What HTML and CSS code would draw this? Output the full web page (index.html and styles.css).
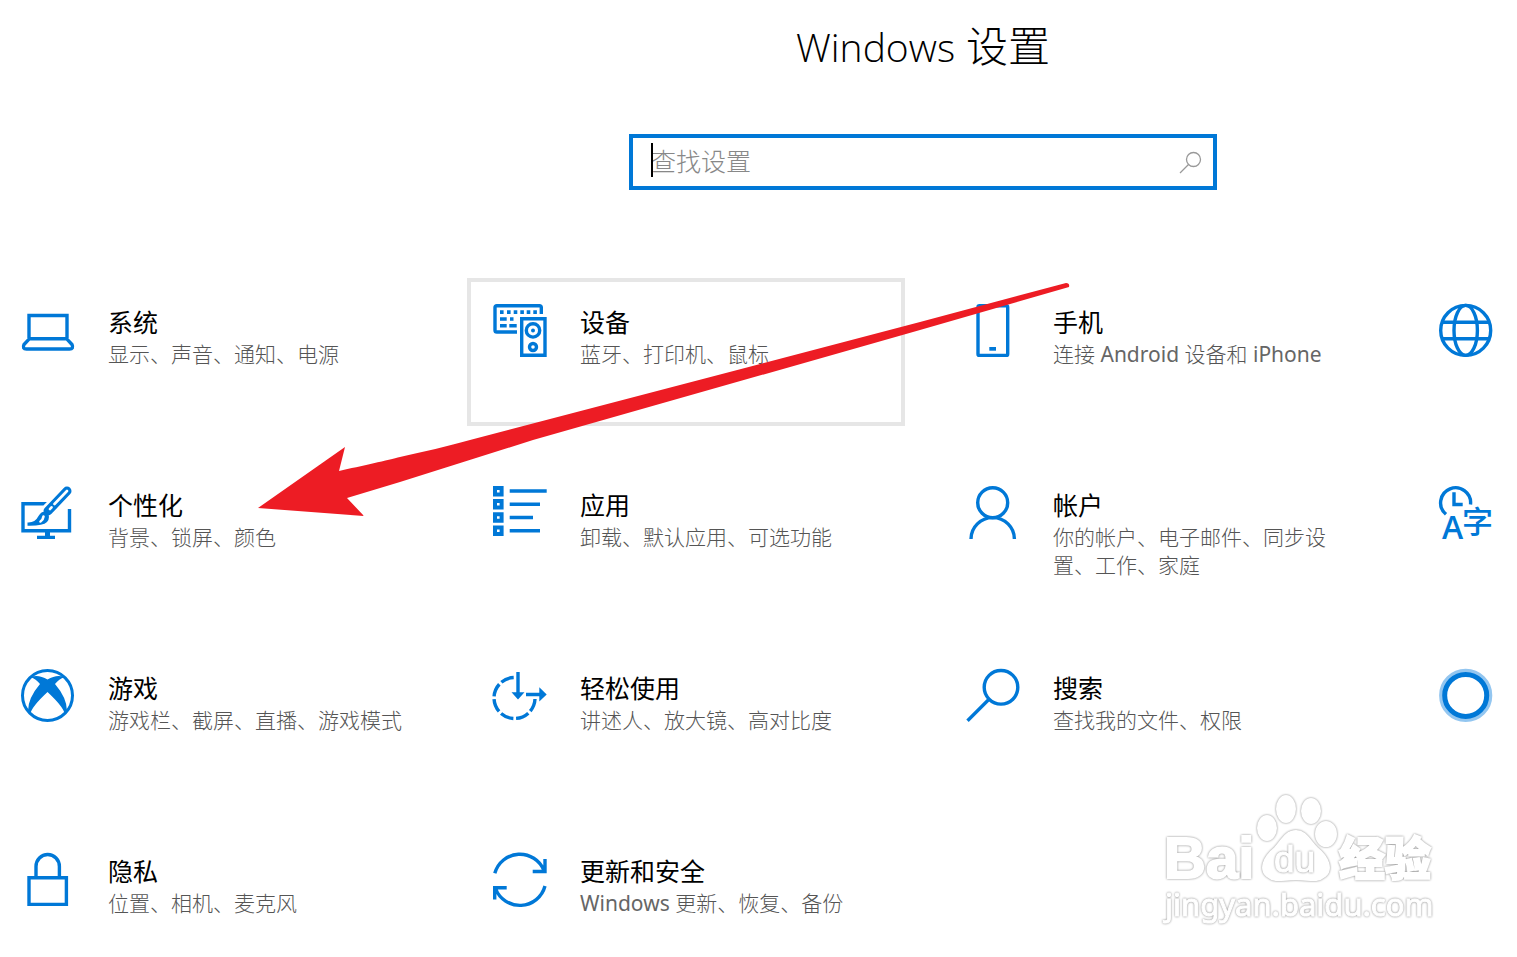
FILE: index.html
```html
<!DOCTYPE html>
<html lang="zh-CN">
<head>
<meta charset="utf-8">
<title>Windows 设置</title>
<link rel="stylesheet" href="styles.css">
</head>
<body>
<main class="settings">
  <header class="header">
    <h1 class="heading"><span class="heading-latin">Windows</span> 设置</h1>
    <form class="search">
      <span class="caret"></span>
      <input class="search-input" type="text" placeholder="查找设置" aria-label="查找设置">
      <button class="search-button" type="button" aria-label="搜索">
        <svg class="search-icon" viewBox="0 0 24 24"><circle cx="14.500" cy="9.500" r="7"/><path d="M9.500 14.500L1 23"/></svg>
      </button>
    </form>
  </header>

  <nav class="grid">
    <a class="card" href="#system">
      <svg class="icon" viewBox="0 0 54 54"><path d="M8 34V11.500H46V34M8.500 34.700H45.500L51 40.500Q53 45 48.500 45H5.500Q1 45 3 40.500Z"/></svg>
      <span class="text"><span class="title">系统</span><span class="desc">显示、声音、通知、电源</span></span>
    </a>
    <a class="card active" href="#devices">
      <svg class="icon" viewBox="0 0 54 54">
        <path d="M48.300 10V3.500Q48.300 1.700 46.500 1.700H3.800Q2 1.700 2 3.500V26.200Q2 28 3.800 28H24"/>
        <path class="solid" d="M7 6.300h3.600v3.600H7zM14 6.300h3.600v3.600H14zM20.700 6.300h3.600v3.600h-3.600zM27.300 6.300h3.600v3.600h-3.600zM33.700 6.300h3.600v3.600h-3.600zM40.300 6.300h3.600v3.600h-3.600zM7 13.300h6.700v3.400H7zM17 13.300h3.500v3.400H17zM7 20h6.700v3.400H7zM16.300 20h7.400v3.400h-7.400z"/>
        <path d="M28.700 14.700H52V51.300H28.700Z"/>
        <circle cx="40" cy="26.400" r="6.700"/><circle class="solid" cx="40" cy="26.400" r="2"/><circle cx="40" cy="43" r="3.500"/>
      </svg>
      <span class="text"><span class="title">设备</span><span class="desc">蓝牙、打印机、鼠标</span></span>
    </a>
    <a class="card" href="#phone">
      <svg class="icon" viewBox="0 0 54 54"><rect x="12" y="1.700" width="29.700" height="49.700" rx="1.500"/><path class="solid" d="M23.300 43H30v3.700h-6.700z"/></svg>
      <span class="text"><span class="title">手机</span><span class="desc">连接 <span class="latin">Android</span> 设备和 <span class="latin">iPhone</span></span></span>
    </a>
    <a class="card" href="#network" aria-label="网络和 Internet">
      <svg class="icon" viewBox="0 0 54 54"><circle cx="26.700" cy="26.400" r="25"/><ellipse cx="26.700" cy="26.400" rx="11.700" ry="25"/><path d="M3 18.300H50.500M3 34.700H50.500"/></svg>
    </a>

    <a class="card" href="#personalization">
      <svg class="icon" viewBox="0 0 54 54">
        <path d="M26 16.700H2V43.700H48.500V22"/><path class="solid" d="M24 45h5v4h-5zM16 48.700h18v3.300H16z"/>
        <path class="gap" d="M45.500 4.500L27 23"/><path class="handle" d="M46 4L27 24"/><path class="handle-core" d="M46 4L33.500 17M30.500 20.300L29 22"/>
        <path class="solid" d="M6.500 35.500Q14 36 17.500 29Q21 23 26 25.500Q30 30 26 35Q22 39 6.500 38.700Z"/><path class="handle-core" d="M22.500 29.500Q22 33 19.500 34.500"/>
      </svg>
      <span class="text"><span class="title">个性化</span><span class="desc">背景、锁屏、颜色</span></span>
    </a>
    <a class="card" href="#apps">
      <svg class="icon" viewBox="0 0 54 54"><path class="thick" d="M2 1h6.600v6.400H2zM2 14h6.600v6.400H2zM2 27.300h6.600v6.400H2zM2 40.600h6.600V47H2z"/><path d="M16.700 4H53.700M16.700 17.200H47M16.700 30.500H40M16.700 43.800H47"/></svg>
      <span class="text"><span class="title">应用</span><span class="desc">卸载、默认应用、可选功能</span></span>
    </a>
    <a class="card" href="#accounts">
      <svg class="icon" viewBox="0 0 54 54"><circle cx="26.700" cy="15.700" r="15"/><path d="M5 52A21.700 21.400 0 0 1 48.400 52"/></svg>
      <span class="text"><span class="title">帐户</span><span class="desc">你的帐户、电子邮件、同步设置、工作、家庭</span></span>
    </a>
    <a class="card" href="#time" aria-label="时间和语言">
      <svg class="icon" viewBox="0 0 54 54"><path d="M7 27.300A15 15 0 1 1 31.500 17.500M15 5.300V17.500H23.700"/><text class="latin-glyph" x="3" y="52">A</text><text class="han-glyph" x="23" y="46">字</text></svg>
    </a>

    <a class="card" href="#gaming">
      <svg class="icon" viewBox="0 0 54 54"><circle class="thin" cx="26.500" cy="25.500" r="25"/><path class="solid" d="M9.500 7Q17.500 4 26.500 9.500Q35.500 4 43.500 7Q38 9 34 14Q46 28 46 41L43.500 43Q41.500 36 26.500 22Q11.500 36 9.500 43L7 41Q7 28 19 14Q15 9 9.500 7Z"/></svg>
      <span class="text"><span class="title">游戏</span><span class="desc">游戏栏、截屏、直播、游戏模式</span></span>
    </a>
    <a class="card" href="#ease">
      <svg class="icon" viewBox="0 0 54 54"><path class="dashed" d="M20.700 7.500A20.500 20.500 0 1 0 42 29"/><path d="M25 2V24M33 24.500H47"/><path class="solid" d="M18.500 22.300H31.500L25 29.500ZM46.300 17.300L53.700 24.500L46.300 31.500Z"/></svg>
      <span class="text"><span class="title">轻松使用</span><span class="desc">讲述人、放大镜、高对比度</span></span>
    </a>
    <a class="card" href="#search">
      <svg class="icon" viewBox="0 0 54 54"><circle cx="35" cy="17.300" r="16.800"/><path d="M23 29.300L1.500 50.800"/></svg>
      <span class="text"><span class="title">搜索</span><span class="desc">查找我的文件、权限</span></span>
    </a>
    <a class="card" href="#cortana" aria-label="Cortana">
      <svg class="icon" viewBox="0 0 54 54"><circle class="halo" cx="26.700" cy="25.400" r="24.600"/><circle class="ring" cx="26.700" cy="25.400" r="21"/></svg>
    </a>

    <a class="card" href="#privacy">
      <svg class="icon" viewBox="0 0 54 54"><path d="M8 24.700H45.400V51.400H8ZM15 24V13.500A11.700 12 0 0 1 38.400 13.500V24"/></svg>
      <span class="text"><span class="title">隐私</span><span class="desc">位置、相机、麦克风</span></span>
    </a>
    <a class="card" href="#update">
      <svg class="icon" viewBox="0 0 54 54"><path d="M1.800 20.300A26 26 0 0 1 51 17.500M52 6V18.500H39.700M52 33A26 26 0 0 1 2.500 35.500M1.700 46.500V34.700H13.700"/></svg>
      <span class="text"><span class="title">更新和安全</span><span class="desc"><span class="latin">Windows</span> 更新、恢复、备份</span></span>
    </a>
  </nav>
</main>

<svg class="arrow" viewBox="0 0 820 240" aria-hidden="true"><path d="M0 229L87 168L81 192C103 187 131 181 142 178C165 173 190 167 212 161L662 43L808 4Q812 4 811 8L662 51L275 161L142 203L89 219L106 237Z"/></svg>

<svg class="watermark" viewBox="0 0 280 140" aria-hidden="true">
  <ellipse cx="107" cy="38" rx="9" ry="12"/><ellipse cx="126" cy="19" rx="9" ry="13"/><ellipse cx="151" cy="21" rx="9" ry="12"/><ellipse cx="166" cy="44" rx="10" ry="12"/>
  <path d="M136 41C146 41 149 50 157 58C168 67 173 79 165 86C157 93 149 89 136 89C123 89 115 93 107 86C99 79 104 67 115 58C122 50 126 41 136 41Z"/>
  <text class="mark-brand" x="4" y="88">Bai</text>
  <text class="mark-du" x="114" y="82">du</text>
  <text class="mark-han" x="179" y="85">经验</text>
  <text class="mark-url" x="5" y="126">jingyan.baidu.com</text>
</svg>
</body>
</html>
```
FILE: styles.css
```css
* { box-sizing: border-box; }

body {
  position: relative;
  margin: 0;
  min-height: 100vh;
  overflow: hidden;
  background: #fff;
  color: #000;
  font-family: "Noto Sans", "Noto Sans CJK SC", sans-serif;
}

.settings {
  width: max-content;
  min-width: 100%;
  margin-left: -5px;
}

.header {
  display: flex;
  flex-direction: column;
  align-items: center;
  gap: 58px;
  padding: 17px 0 88px;
}

.heading {
  margin: 0;
  font-family: "Open Sans", "Noto Sans CJK SC", sans-serif;
  font-size: 42px;
  font-weight: 300;
  line-height: 58px;
}

.heading-latin { font-size: 39px; }

.search {
  position: relative;
  display: flex;
  align-items: center;
  width: 588px;
  height: 56px;
  padding: 0 10px 0 18px;
  border: 4px solid #0078d7;
}

.caret {
  position: absolute;
  left: 18px;
  top: 5px;
  width: 2px;
  height: 34px;
  background: #000;
}

.search-input {
  flex: 1;
  min-width: 0;
  height: 100%;
  padding: 0 0 4px;
  border: 0;
  outline: 0;
  background: none;
  font-family: "Noto Sans CJK SC", sans-serif;
  font-size: 25px;
  font-weight: 300;
}

.search-input::placeholder { color: #888; opacity: 1; }

.search-button {
  width: 24px;
  height: 24px;
  padding: 0;
  border: 0;
  background: none;
}

.search-icon {
  display: block;
  fill: none;
  stroke: #999;
  stroke-width: 1.3;
}

.grid {
  display: grid;
  grid-template-columns: minmax(437px, 437fr) repeat(3, minmax(438px, 438fr));
  grid-auto-rows: minmax(148px, auto);
  gap: 35px;
}

.card {
  display: flex;
  align-items: flex-start;
  gap: 33px;
  padding: 22px;
  border: 4px solid transparent;
  color: inherit;
  text-decoration: none;
}

.active { border-color: #e6e6e6; }

.icon {
  flex: none;
  width: 54px;
  height: 54px;
  overflow: visible;
  fill: none;
  stroke: #0078d7;
  stroke-width: 3.4;
}

.icon .solid { fill: #0078d7; stroke: none; }
.icon .thin { stroke-width: 3; }
.icon .thick { stroke-width: 4; }
.icon .gap { stroke: #fff; stroke-width: 13; }
.icon .handle { stroke-width: 9; stroke-linecap: round; }
.icon .handle-core { stroke: #fff; stroke-width: 2.6; stroke-linecap: round; }
.icon .dashed { stroke-dasharray: 13.4 2.8; }
.icon .halo { stroke: #93c6f0; stroke-width: 4; }
.icon .ring { stroke-width: 5; }
.icon .latin-glyph, .icon .han-glyph { fill: #0078d7; stroke: none; }
.latin-glyph { font: 600 32px "Open Sans", sans-serif; }
.han-glyph { font: 500 31px "Noto Sans CJK SC", sans-serif; }

.text {
  display: flex;
  flex-direction: column;
  flex: 0 1 296px;
  gap: 2px;
  padding-top: 2px;
}

.title {
  font-size: 25px;
  font-weight: 400;
  line-height: 32px;
}

.desc {
  color: #555;
  font-size: 21px;
  font-weight: 300;
  line-height: 28px;
}

.latin {
  color: #666;
  font-weight: 400;
}

.arrow {
  position: absolute;
  left: 258px;
  top: 279px;
  width: 820px;
  height: 240px;
  fill: #ed1c24;
  pointer-events: none;
}

.watermark {
  position: absolute;
  right: 77px;
  top: 790px;
  width: 280px;
  height: 140px;
  overflow: visible;
  fill: #fff;
  stroke: #fff;
  stroke-width: 2;
  pointer-events: none;
}

.watermark > * { filter: drop-shadow(0 0 1px #888); }

.mark-brand { font: 700 58px "Liberation Sans", sans-serif; }
.mark-du { font: 400 37px "Liberation Sans", sans-serif; stroke-width: 1; }
.mark-han { font: 900 46px "Noto Sans CJK SC", sans-serif; }
.mark-url { font: 400 31px "Noto Sans", sans-serif; stroke-width: 1; }
```
